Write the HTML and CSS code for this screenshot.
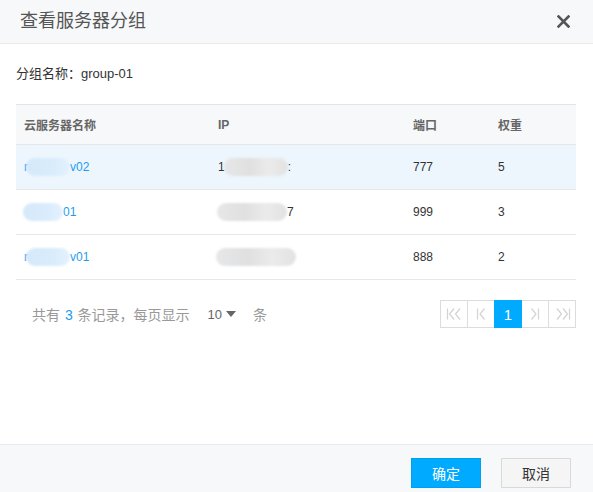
FILE: index.html
```html
<!DOCTYPE html>
<html lang="zh">
<head>
<meta charset="utf-8">
<title>查看服务器分组</title>
<link rel="stylesheet" href="styles.css">
</head>
<body>
<div class="modal">
  <div class="modal-header">
    <span class="modal-title">查看服务器分组</span>
    <span class="modal-close">
      <svg width="13" height="13" viewBox="0 0 13 13"><path d="M1.5 1.5 L11.5 11.5 M11.5 1.5 L1.5 11.5" stroke="#555" stroke-width="2.6" stroke-linecap="square"/></svg>
    </span>
  </div>
  <div class="modal-body">
    <div class="group-name">分组名称：group-01</div>
    <div class="table">
      <div class="row head">
        <div class="cell">云服务器名称</div>
        <div class="cell">IP</div>
        <div class="cell">端口</div>
        <div class="cell">权重</div>
      </div>
      <div class="row hover">
        <div class="cell"><a class="link">r<span class="blur blue b1"></span>v02</a></div>
        <div class="cell ip">1<span class="blur grey g1"></span>:</div>
        <div class="cell">777</div>
        <div class="cell">5</div>
      </div>
      <div class="row">
        <div class="cell"><a class="link"><span class="blur blue b2"></span>01</a></div>
        <div class="cell ip"><span class="blur grey g2"></span>7</div>
        <div class="cell">999</div>
        <div class="cell">3</div>
      </div>
      <div class="row">
        <div class="cell"><a class="link">r<span class="blur blue b3"></span>v01</a></div>
        <div class="cell ip"><span class="blur grey g3"></span></div>
        <div class="cell">888</div>
        <div class="cell">2</div>
      </div>
    </div>
    <div class="pagination">
      <div class="summary">
        <span>共有 <em class="count">3</em> 条记录，每页显示</span>
        <span class="size">10 <i class="caret"></i></span>
        <span>条</span>
      </div>
      <div class="pager">
        <span class="pbtn"><svg width="17" height="12" viewBox="0 0 17 12"><path d="M1.5 0.5 V11.5 M8 0.5 L3.5 6 L8 11.5 M14 0.5 L9.5 6 L14 11.5" stroke="#d3d3d3" stroke-width="1.2" fill="none"/></svg></span>
        <span class="pbtn"><svg width="10" height="12" viewBox="0 0 10 12"><path d="M1.5 0.5 V11.5 M8.5 0.5 L4 6 L8.5 11.5" stroke="#d3d3d3" stroke-width="1.2" fill="none"/></svg></span>
        <span class="pbtn active">1</span>
        <span class="pbtn"><svg width="10" height="12" viewBox="0 0 10 12"><path d="M8.5 0.5 V11.5 M1.5 0.5 L6 6 L1.5 11.5" stroke="#d3d3d3" stroke-width="1.2" fill="none"/></svg></span>
        <span class="pbtn"><svg width="17" height="12" viewBox="0 0 17 12"><path d="M15.5 0.5 V11.5 M3 0.5 L7.5 6 L3 11.5 M9 0.5 L13.5 6 L9 11.5" stroke="#d3d3d3" stroke-width="1.2" fill="none"/></svg></span>
      </div>
    </div>
  </div>
  <div class="modal-footer">
    <button class="btn primary">确定</button>
    <button class="btn">取消</button>
  </div>
</div>
</body>
</html>
```

FILE: styles.css
```css
* { box-sizing: border-box; }
html, body { margin: 0; padding: 0; height: 100%; }
body {
  font-family: "Liberation Sans", "Noto Sans CJK SC", sans-serif;
  color: #333;
  background: #fff;
}
.modal {
  width: 593px;
  height: 492px;
  display: flex;
  flex-direction: column;
}
.modal-header {
  height: 44px;
  background: #f7f8fa;
  border-bottom: 1px solid #e8e9eb;
  display: flex;
  align-items: center;
  justify-content: space-between;
  padding: 0 23px 1px 20px;
}
.modal-title {
  font-size: 18px;
  color: #555;
  line-height: 24px;
}
.modal-close { display: flex; }
.modal-body {
  flex: 1;
  padding: 0 17px 0 16px;
}
.group-name {
  font-size: 13px;
  line-height: 20px;
  margin-top: 20px;
  margin-bottom: 20px;
  color: #333;
}
.table {
  border-top: 1px solid #e3e4e6;
}
.row {
  display: grid;
  grid-template-columns: 194px 195px 85px 86px;
  height: 45px;
  border-bottom: 1px solid #e6e7e9;
  font-size: 12px;
  align-items: center;
}
.row.head {
  height: 40px;
  background: #f7f8fa;
  font-weight: bold;
  color: #666;
}
.row.hover { background: #edf6fd; }
.cell {
  padding-left: 8px;
  display: flex;
  align-items: center;
  white-space: nowrap;
}
.link {
  color: #1f9bf2;
  display: flex;
  align-items: center;
}
.blur {
  display: inline-block;
  height: 18px;
  border-radius: 9px;
  filter: blur(1.2px);
}
.blue { background: linear-gradient(90deg, #d4e9fb, #d9ecfc 60%, #e4f1fd); }
.grey { background: linear-gradient(90deg, #e6e7e9, #e0e0e0 40%, #ebebeb 70%, #e2e2e2); }
.b1 { width: 44px; margin-left: -2px; }
.b2 { width: 40px; margin-left: -1px; }
.b3 { width: 44px; margin-left: -2px; }
.g1 { width: 64px; margin-left: -1px; }
.g2 { width: 70px; margin-left: -1px; }
.g3 { width: 80px; margin-left: -2px; }
.ip { color: #333; }
.pagination {
  margin-top: 20px;
  display: flex;
  justify-content: space-between;
  align-items: center;
}
.summary {
  padding-left: 16px;
  font-size: 14px;
  color: #999;
  display: flex;
  align-items: center;
}
.count { font-style: normal; color: #1f9bf2; margin: 0 1px; }
.size {
  color: #666;
  font-size: 13px;
  margin-left: 18px;
  margin-right: 17px;
  display: flex;
  align-items: center;
}
.caret {
  display: inline-block;
  width: 0; height: 0;
  border-left: 5px solid transparent;
  border-right: 5px solid transparent;
  border-top: 6px solid #666;
  margin-left: 4px;
}
.pager { display: flex; }
.pbtn {
  width: 28px;
  height: 28px;
  border: 1px solid #dcdcdc;
  margin-left: -1px;
  display: flex;
  align-items: center;
  justify-content: center;
  background: #fff;
  font-size: 15px;
}
.pbtn:first-child { margin-left: 0; }
.pbtn.active {
  background: #00aaff;
  border-color: #00aaff;
  color: #fff;
  position: relative;
}
.modal-footer {
  height: 48px;
  background: #f7f8fa;
  border-top: 1px solid #e8e9eb;
  display: flex;
  justify-content: flex-end;
  align-items: flex-start;
  padding: 13px 22px 0 0;
  gap: 20px;
}
.btn {
  width: 70px;
  height: 30px;
  font-family: inherit;
  font-size: 14px;
  border: 1px solid #d9d9d9;
  background: #f5f5f5;
  color: #333;
  padding: 0;
}
.btn.primary {
  background: #00aaff;
  border-color: #00a0f0;
  color: #fff;
}
```
